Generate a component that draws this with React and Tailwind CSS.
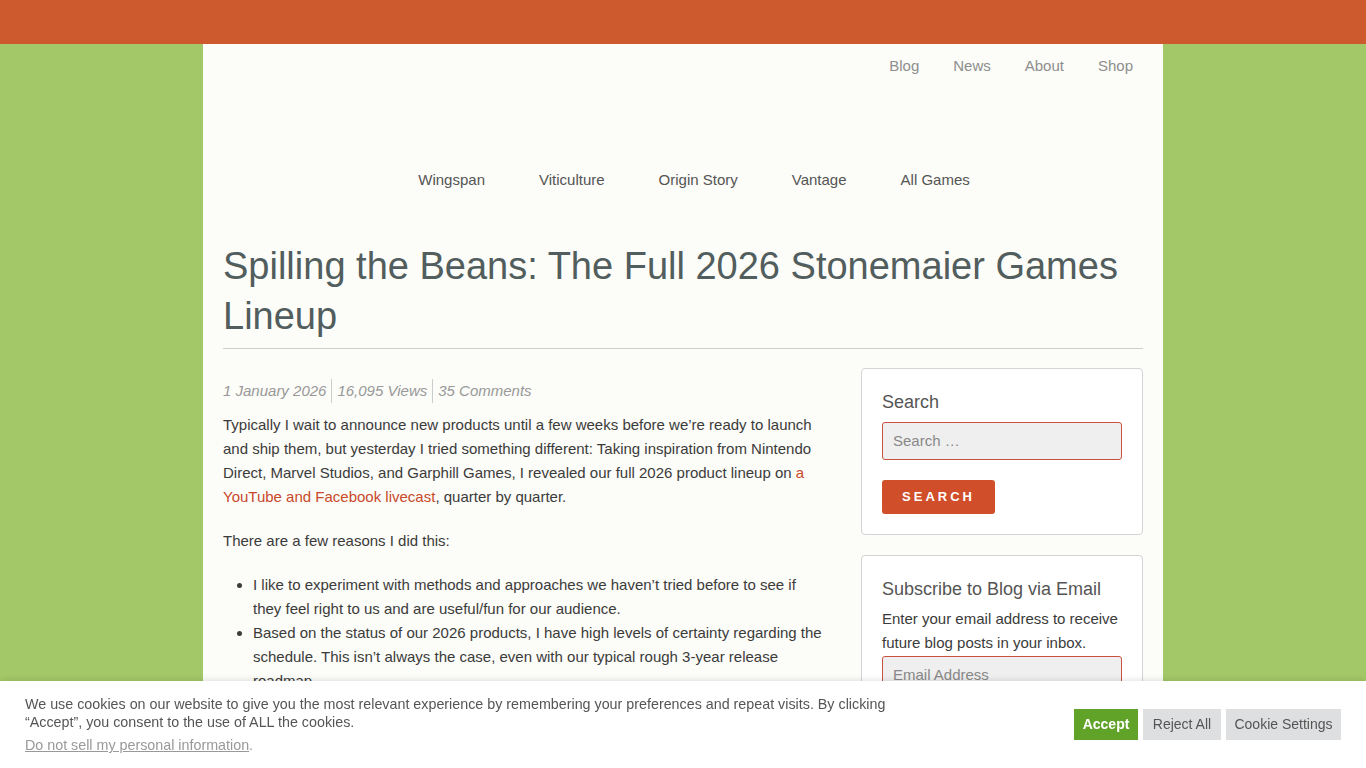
import React from "react";

export default function App() {
  const font = { fontFamily: '"Liberation Sans", Arial, sans-serif' };
  return (
    <div className="min-h-screen bg-[#a3c867]" style={font}>
      <div className="h-[44px] bg-[#cd5a2e]" />
      <div className="mx-auto w-[960px] bg-[#fcfcf8] pb-[200px]">
        <nav className="flex justify-end gap-[34px] pr-[30px] pt-[13px] text-[15px] leading-[18px] text-[#8e8e8e]">
          <a>Blog</a>
          <a>News</a>
          <a>About</a>
          <a>Shop</a>
        </nav>
        <nav className="flex justify-center gap-[54px] pl-[22px] pt-[96px] text-[15px] leading-[18px] text-[#555]">
          <a>Wingspan</a>
          <a>Viticulture</a>
          <a>Origin Story</a>
          <a>Vantage</a>
          <a>All Games</a>
        </nav>
        <div className="px-[20px]">
          <h1 className="mt-[52px] border-b border-[#cfcfcf] pb-[7px] text-[38px] leading-[50px] text-[#525d5d]">
            Spilling the Beans: The Full 2026 Stonemaier Games Lineup
          </h1>
          <div className="mt-[19px] flex gap-[36px]">
            <main className="w-[602px] text-[15px] leading-[24px] text-[#3b3b3b]">
              <div className="mt-[11px] flex italic text-[#999]">
                <span className="border-r border-[#ccc] pr-[5px]">1 January 2026</span>
                <span className="border-r border-[#ccc] px-[5px]">16,095 Views</span>
                <span className="pl-[5px]">35 Comments</span>
              </div>
              <p className="mt-[10px]">
                Typically I wait to announce new products until a few weeks before we’re ready to launch and ship them, but yesterday I tried something different: Taking inspiration from Nintendo Direct, Marvel Studios, and Garphill Games, I revealed our full 2026 product lineup on{" "}
                <a className="text-[#c8492b]">a YouTube and Facebook livecast</a>, quarter by quarter.
              </p>
              <p className="mt-[20px]">There are a few reasons I did this:</p>
              <ul className="mt-[20px] list-disc pl-[30px]">
                <li>I like to experiment with methods and approaches we haven’t tried before to see if they feel right to us and are useful/fun for our audience.</li>
                <li>Based on the status of our 2026 products, I have high levels of certainty regarding the schedule. This isn’t always the case, even with our typical rough 3-year release roadmap.</li>
              </ul>
            </main>
            <aside className="w-[282px]">
              <div className="rounded-[4px] border border-[#d4d4d4] bg-white px-[20px] pb-[20px] pt-[22px]">
                <h2 className="text-[18px] leading-[22px] text-[#555]">Search</h2>
                <div className="mt-[9px] flex h-[38px] items-center rounded-[3px] border border-[#c9513f] bg-[#efefef] px-[10px] text-[15px] text-[#888]">
                  Search …
                </div>
                <button className="mt-[20px] h-[34px] w-[113px] rounded-[3px] bg-[#d04f2a] text-[13px] font-bold tracking-[3px] text-white">
                  SEARCH
                </button>
              </div>
              <div className="mt-[20px] rounded-[4px] border border-[#d4d4d4] bg-white px-[20px] pb-[20px] pt-[22px]">
                <h2 className="text-[18px] leading-[22px] text-[#555]">Subscribe to Blog via Email</h2>
                <p className="mt-[7px] text-[15px] leading-[24px] text-[#3b3b3b]">
                  Enter your email address to receive future blog posts in your inbox.
                </p>
                <div className="mt-[1px] flex h-[38px] items-center rounded-[3px] border border-[#c9513f] bg-[#efefef] px-[10px] text-[15px] text-[#888]">
                  Email Address
                </div>
              </div>
            </aside>
          </div>
        </div>
      </div>
      <div className="fixed bottom-0 left-0 right-0 flex h-[87px] items-center justify-between bg-white pl-[25px] pr-[25px] shadow-[0_-1px_6px_rgba(0,0,0,0.12)]">
        <div className="w-[900px] text-[14.3px] leading-[18px] text-[#555]">
          <p>
            We use cookies on our website to give you the most relevant experience by remembering your preferences and repeat visits. By clicking “Accept”, you consent to the use of ALL the cookies.
          </p>
          <p className="mt-[5px] text-[#999]">
            <a className="underline">Do not sell my personal information</a>.
          </p>
        </div>
        <div className="flex gap-[5px] text-[14px]">
          <button className="h-[31px] w-[64px] bg-[#61a229] font-bold text-white">Accept</button>
          <button className="h-[31px] w-[78px] bg-[#dedfe0] text-[#555]">Reject All</button>
          <button className="h-[31px] w-[115px] bg-[#dedfe0] text-[#555]">Cookie Settings</button>
        </div>
      </div>
    </div>
  );
}
